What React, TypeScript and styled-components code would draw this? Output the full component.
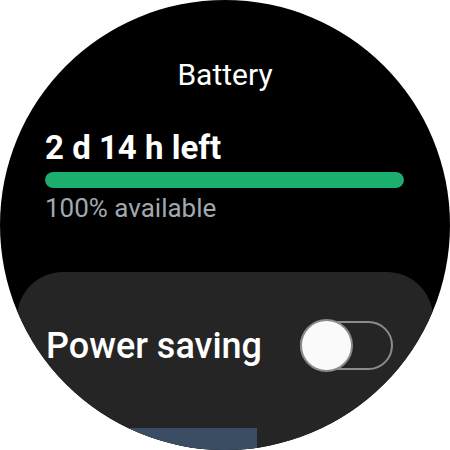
import React from "react";
import styled, { createGlobalStyle } from "styled-components";

const Global = createGlobalStyle`
  html, body { margin: 0; padding: 0; background: #ffffff; }
  body { font-family: Roboto, "Noto Sans", sans-serif; }
`;

const Screen = styled.div`
  width: 450px;
  height: 450px;
  border-radius: 50%;
  overflow: hidden;
  background: #000000;
  display: flex;
  flex-direction: column;
  padding: 0 45px;
  box-sizing: border-box;
  color: #ffffff;
  & > * { flex-shrink: 0; }
`;

const Title = styled.div`
  margin-top: 57px;
  font-size: 30px;
  line-height: 36px;
  text-align: center;
  font-weight: 400;
`;

const TimeLeft = styled.div`
  margin-top: 35px;
  font-size: 33px;
  line-height: 40px;
  font-weight: 700;
`;

const Bar = styled.div`
  margin-top: 4px;
  height: 16px;
  width: 359px;
  border-radius: 8px;
  background: #2a2a2a;
  overflow: hidden;
`;

const BarFill = styled.div`
  height: 100%;
  background: #1bae6f;
  border-radius: 8px;
`;

const Available = styled.div`
  margin-top: 4px;
  font-size: 26px;
  line-height: 32px;
  color: #a0a8b0;
`;

const Card = styled.div`
  margin: 48px -28px 0;
  background: #252525;
  border-radius: 46px 46px 0 0;
  padding: 47px 40px 0 29px;
  height: 300px;
  display: flex;
  flex-direction: column;
  & > * { flex-shrink: 0; }
`;

const Row = styled.div`
  display: flex;
  align-items: center;
  justify-content: space-between;
  height: 53px;
`;

const RowLabel = styled.div`
  font-size: 36px;
  line-height: 44px;
  font-weight: 500;
`;

const Track = styled.div<{ $on: boolean }>`
  position: relative;
  width: 93px;
  height: 49px;
  box-sizing: border-box;
  border: 2px solid #8c8c8c;
  border-radius: 25px;
  background: ${(p) => (p.$on ? "#1bae6f" : "transparent")};
`;

const Thumb = styled.div<{ $on: boolean }>`
  position: absolute;
  top: -4px;
  ${(p) => (p.$on ? "right: -2px;" : "left: -2px;")}
  width: 53px;
  height: 53px;
  box-sizing: border-box;
  border-radius: 50%;
  background: #fafafa;
  border: 2.5px solid #8a8a8a;
`;

const NextItem = styled.div`
  margin-top: 56px;
  width: 211px;
  height: 40px;
  background: #3a4d62;
`;

export default function App() {
  const level = 100;
  const on = false;
  return (
    <>
      <Global />
      <Screen>
        <Title>Battery</Title>
        <TimeLeft>2 d 14 h left</TimeLeft>
        <Bar>
          <BarFill style={{ width: `${level}%` }} />
        </Bar>
        <Available>{level}% available</Available>
        <Card>
          <Row>
            <RowLabel>Power saving</RowLabel>
            <Track $on={on}>
              <Thumb $on={on} />
            </Track>
          </Row>
          <NextItem />
        </Card>
      </Screen>
    </>
  );
}
